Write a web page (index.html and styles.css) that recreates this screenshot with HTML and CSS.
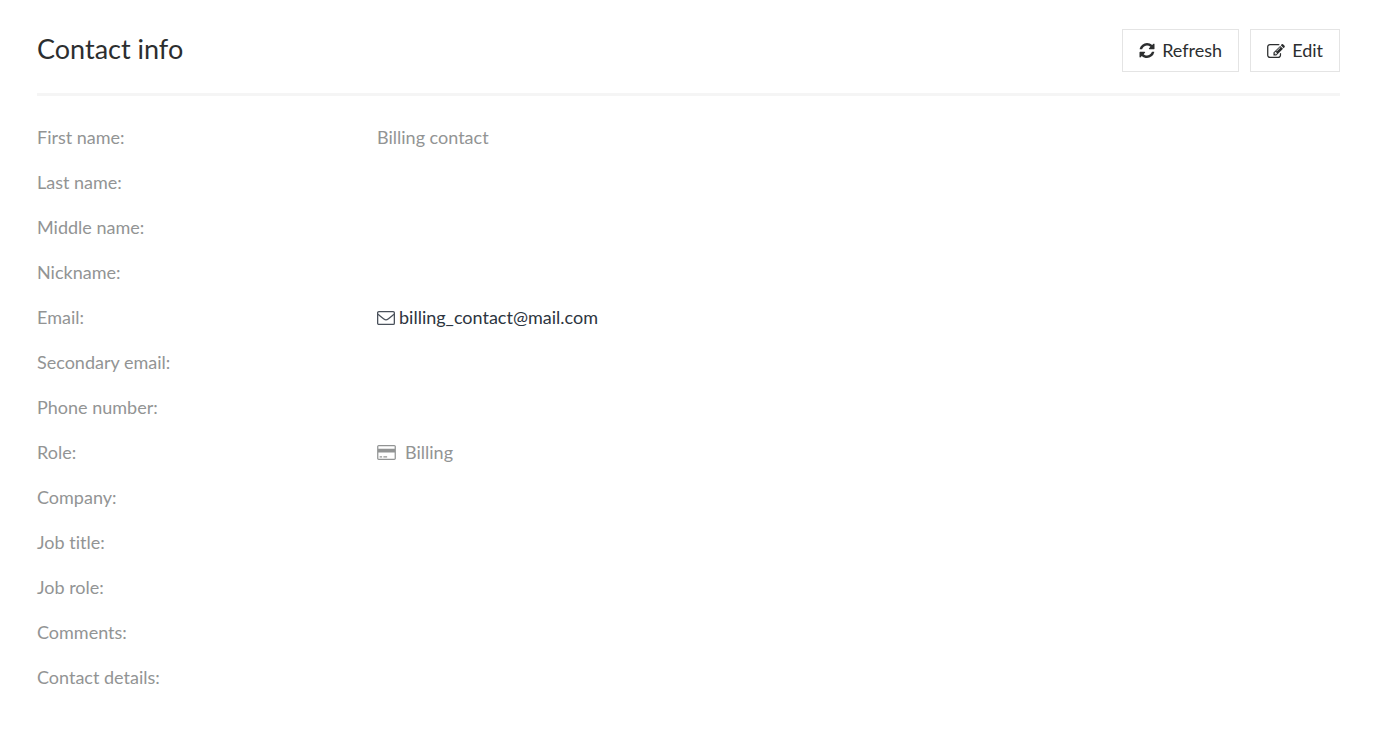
FILE: index.html
```html
<!DOCTYPE html>
<html lang="en">
<head>
<meta charset="utf-8">
<meta name="viewport" content="width=device-width, initial-scale=1">
<title>Contact info</title>
<link rel="stylesheet" href="styles.css">
</head>
<body>
<main class="panel">
  <header class="panel-header">
    <h1 class="panel-title">Contact info</h1>
    <div class="actions">
      <button type="button" class="button">
        <svg class="icon-refresh" viewBox="0 0 1536 1536" aria-hidden="true"><path d="M1511 928q0 5-1 7-64 268-268 434.500T764 1536q-146 0-282.500-55T238 1324l-129 129q-19 19-45 19t-45-19-19-45V960q0-26 19-45t45-19h448q26 0 45 19t19 45-19 45l-137 137q71 66 161 102t187 36q134 0 250-65t186-179q11-17 53-117 8-23 30-23h192q13 0 22.500 9.500t9.500 22.500zm25-800v448q0 26-19 45t-45 19h-448q-26 0-45-19t-19-45 19-45l138-138Q969 256 768 256q-134 0-250 65T332 500q-11 17-53 117-8 23-30 23H50q-13 0-22.500-9.500T18 608v-7q65-268 270-434.500T768 0q146 0 284 55.500T1297 212l130-129q19-19 45-19t45 19 19 45z"/></svg>
        <span>Refresh</span>
      </button>
      <button type="button" class="button">
        <svg class="icon-edit" viewBox="0 128 1792 1408" aria-hidden="true"><path d="M888 1184l116-116-152-152-116 116v56h96v96h56zm440-720q-16-16-33 1l-350 350q-17 17-1 33t33-1l350-350q17-17 1-33zm80 594v190q0 119-84.500 203.500t-203.500 84.500h-832q-119 0-203.500-84.500t-84.500-203.500v-832q0-119 84.500-203.500t203.500-84.500h832q63 0 117 25 15 7 18 23 3 17-9 29l-49 49q-14 14-32 8-23-6-45-6h-832q-66 0-113 47t-47 113v832q0 66 47 113t113 47h832q66 0 113-47t47-113v-126q0-13 9-22l64-64q15-15 35-7t20 29zm-96-738l288 288-672 672h-288v-288zm444 132l-92 92-288-288 92-92q28-28 68-28t68 28l152 152q28 28 28 68t-28 68z"/></svg>
        <span>Edit</span>
      </button>
    </div>
  </header>
  <dl class="details">
    <dt>First name:</dt><dd>Billing contact</dd>
    <dt>Last name:</dt><dd></dd>
    <dt>Middle name:</dt><dd></dd>
    <dt>Nickname:</dt><dd></dd>
    <dt>Email:</dt>
    <dd class="email">
      <a class="email-link" href="mailto:billing_contact@mail.com">
        <svg class="icon-mail" viewBox="0 0 18 14" aria-hidden="true"><rect x=".65" y=".65" width="16.700" height="12.700" rx="1.200"/><path d="M1 3.300C3 5 5 6.500 6.900 8c1.500 1.200 2.700 1.200 4.200 0C13 6.500 15 5 17 3.300"/></svg>
        <span>billing_contact@mail.com</span>
      </a>
    </dd>
    <dt>Secondary email:</dt><dd></dd>
    <dt>Phone number:</dt><dd></dd>
    <dt>Role:</dt>
    <dd class="role">
      <svg class="icon-card" viewBox="0 0 1920 1536" aria-hidden="true"><path fill-rule="evenodd" d="M1760 0q66 0 113 47t47 113v1216q0 66-47 113t-113 47H160q-66 0-113-47T0 1376V160Q0 94 47 47T160 0h1600zM160 128q-13 0-22.500 9.500T128 160v224h1664V160q0-13-9.500-22.500T1760 128H160zm1600 1280q13 0 22.500-9.500t9.500-22.500V768H128v608q0 13 9.500 22.500t22.500 9.500h1600zM256 1280v-128h256v128H256zm384 0v-128h384v128H640z"/></svg>
      <span>Billing</span>
    </dd>
    <dt>Company:</dt><dd></dd>
    <dt>Job title:</dt><dd></dd>
    <dt>Job role:</dt><dd></dd>
    <dt>Comments:</dt><dd></dd>
    <dt>Contact details:</dt><dd></dd>
  </dl>
</main>
</body>
</html>
```
FILE: styles.css
```css
* {
  box-sizing: border-box;
}

body {
  margin: 0;
  background: #fff;
  color: #2c2e2f;
  font-family: Lato, "Noto Sans", sans-serif;
  font-size: 18px;
  font-variant-ligatures: none;
  line-height: 25px;
}

.panel {
  padding: 29px 44px 29px 37px;
}

.panel-header {
  display: flex;
  align-items: flex-start;
  justify-content: space-between;
  padding-bottom: 21px;
  border-bottom: 3px solid #f5f5f5;
}

.panel-title {
  margin: 0;
  font-size: 27px;
  font-weight: 400;
  line-height: 40px;
}

.actions {
  display: flex;
  gap: 11px;
}

.button {
  display: flex;
  align-items: center;
  gap: 7px;
  height: 43px;
  padding: 0 16px;
  border: 1px solid #e4e4e4;
  border-radius: 0;
  background: #fff;
  color: #2c2e2f;
  font: inherit;
  cursor: pointer;
}

svg {
  flex: none;
  fill: currentColor;
}

.icon-refresh {
  width: 16px;
  height: 15px;
}

.icon-edit {
  width: 18px;
  height: 14px;
}

.details {
  display: grid;
  grid-template-columns: 340px 1fr;
  row-gap: 20px;
  margin: 0;
  padding-top: 29px;
  color: #929494;
}

.details dd {
  margin: 0;
}

.email {
  display: flex;
}

.email-link {
  display: flex;
  align-items: center;
  gap: 4px;
  color: #2d3540;
  text-decoration: none;
}

.icon-mail {
  width: 18px;
  height: 14px;
  fill: none;
  stroke: #4a515b;
  stroke-width: 1.3;
}

.role {
  display: flex;
  align-items: center;
  gap: 9px;
}

.icon-card {
  width: 19px;
  height: 15px;
}
```
